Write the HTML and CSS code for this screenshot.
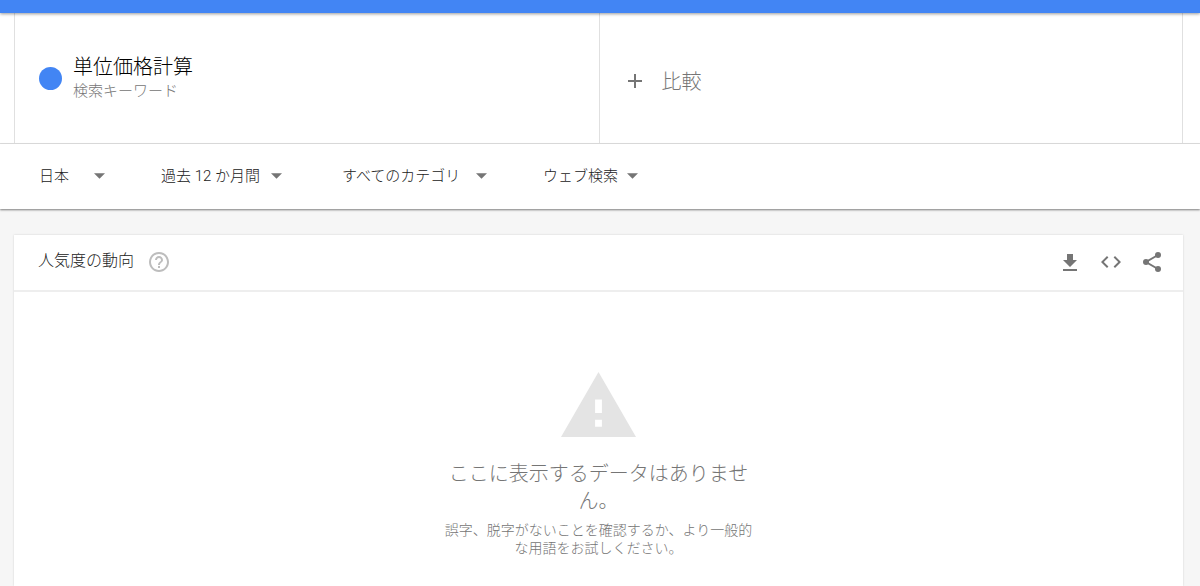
FILE: index.html
```html
<!DOCTYPE html>
<html lang="ja">
<head>
    <meta charset="UTF-8">
    <meta name="viewport" content="width=device-width, initial-scale=1.0">
    <title>単位価格計算 - 調べる</title>
    <link rel="stylesheet" href="styles.css">
</head>
<body>
    <header class="top-bar"></header>

    <section class="terms">
        <div class="term">
            <span class="dot"></span>
            <div>
                <h1 class="term-name">単位価格計算</h1>
                <p class="term-type">検索キーワード</p>
            </div>
        </div>
        <button type="button" class="term compare">
            <svg class="icon" viewBox="0 0 24 24"><path d="M19 13h-6v6h-2v-6H5v-2h6V5h2v6h6v2z"/></svg>
            <span>比較</span>
        </button>
    </section>

    <form class="filters">
        <select class="filter region" aria-label="地域">
            <option>日本</option>
        </select>
        <select class="filter period" aria-label="期間">
            <option>過去 12 か月間</option>
        </select>
        <select class="filter category" aria-label="カテゴリ">
            <option>すべてのカテゴリ</option>
        </select>
        <select class="filter source" aria-label="検索の種類">
            <option>ウェブ検索</option>
        </select>
    </form>

    <main>
        <section class="card">
            <div class="card-header">
                <h2 class="card-title">人気度の動向</h2>
                <button type="button" class="icon-button help" aria-label="ヘルプ">
                    <svg class="icon" viewBox="0 0 24 24"><path d="M11 18h2v-2h-2v2zm1-16C6.480 2 2 6.480 2 12s4.480 10 10 10 10-4.480 10-10S17.520 2 12 2zm0 18c-4.410 0-8-3.590-8-8s3.590-8 8-8 8 3.590 8 8-3.590 8-8 8zm0-14c-2.210 0-4 1.790-4 4h2c0-1.100.900-2 2-2s2 .900 2 2c0 2-3 1.750-3 5h2c0-2.250 3-2.500 3-5 0-2.210-1.790-4-4-4z"/></svg>
                </button>
                <div class="actions">
                    <button type="button" class="icon-button" aria-label="ダウンロード">
                        <svg class="icon" viewBox="0 0 24 24"><path d="M19 10h-4V4H9v6H5l7 7 7-7zM5 19v2h14v-2H5z"/></svg>
                    </button>
                    <button type="button" class="icon-button" aria-label="埋め込み">
                        <svg class="icon" viewBox="0 0 24 24"><path d="M9.400 16.600L4.800 12l4.600-4.600L8 6l-6 6 6 6 1.400-1.400zm5.200 0l4.600-4.600-4.600-4.600L16 6l6 6-6 6-1.400-1.400z"/></svg>
                    </button>
                    <button type="button" class="icon-button" aria-label="共有">
                        <svg class="icon" viewBox="0 0 24 24">
                            <path d="M18 5L6 12l12 7" fill="none" stroke="currentColor" stroke-width="2"/>
                            <circle cx="18" cy="5" r="3"/>
                            <circle cx="6" cy="12" r="3"/>
                            <circle cx="18" cy="19" r="3"/>
                        </svg>
                    </button>
                </div>
            </div>
            <div class="empty">
                <svg class="warning" viewBox="0 0 22 19"><path d="M0 19h22L11 0 0 19zm12-3h-2v-2h2v2zm0-4h-2V8h2v4z"/></svg>
                <p class="empty-title">ここに表示するデータはありません。</p>
                <p class="empty-text">誤字、脱字がないことを確認するか、より一般的な用語をお試しください。</p>
            </div>
        </section>
    </main>
</body>
</html>
```
FILE: styles.css
```css
* {
    box-sizing: border-box;
}

body {
    display: flex;
    flex-direction: column;
    min-height: 100vh;
    margin: 0;
    background-color: #f6f6f6;
    color: #212121;
    font-family: Roboto, "Noto Sans CJK JP", sans-serif;
    font-weight: 300;
}

h1, h2, p {
    margin: 0;
    font-weight: 300;
}

button, select {
    border: none;
    background: none;
    font: inherit;
    cursor: pointer;
}

.icon {
    display: block;
    width: 24px;
    height: 24px;
    fill: currentColor;
}

.top-bar {
    position: relative;
    height: 13px;
    background-color: #4285f4;
    box-shadow: 0 1px 3px rgba(0, 0, 0, 0.4);
}

/* search terms */
.terms {
    display: grid;
    grid-template-columns: 1fr 1fr;
    padding: 0 17px 0 14px;
    background-color: #fff;
    border-bottom: 1px solid #e0e0e0;
}

.term {
    display: flex;
    align-items: center;
    height: 130px;
    padding: 0 24px;
    border-left: 1px solid #e0e0e0;
}

.dot {
    width: 23px;
    height: 23px;
    margin-right: 11px;
    border-radius: 50%;
    background-color: #4285f4;
}

.term-name {
    color: #000;
    font-size: 20px;
    line-height: 26px;
}

.term-type {
    color: #757575;
    font-size: 15px;
    line-height: 22px;
}

.compare {
    gap: 15px;
    padding: 5px 24px 0 23px;
    border-right: 1px solid #e0e0e0;
    color: #757575;
    font-size: 20px;
}

/* filters */
.filters {
    display: flex;
    align-items: center;
    gap: 56px;
    height: 65px;
    padding: 0 39px 2px;
    background-color: #fff;
    box-shadow: 0 1px 2px rgba(0, 0, 0, 0.5);
}

.filter {
    height: 32px;
    padding: 0;
    appearance: none;
    color: #212121;
    font-size: 15px;
    background: url("data:image/svg+xml,%3Csvg xmlns='http://www.w3.org/2000/svg' viewBox='0 0 10 5'%3E%3Cpath fill='%23757575' d='M0 0h10L5 5z'/%3E%3C/svg%3E") no-repeat right center / 11px 6px;
}

.region {
    width: 66px;
}

.period {
    width: 121px;
    margin-right: 4px;
}

.category {
    width: 145px;
}

.source {
    width: 95px;
}

/* trend card */
main {
    display: flex;
    flex-grow: 1;
    padding: 26px 17px 0 14px;
}

.card {
    flex-grow: 1;
    background-color: #fff;
    box-shadow: 0 0 2px rgba(0, 0, 0, 0.15);
}

.card-header {
    display: flex;
    align-items: center;
    height: 57px;
    padding: 0 19px 2px 24px;
    border-bottom: 2px solid #eee;
}

.card-title {
    font-size: 16px;
    line-height: 24px;
    padding-bottom: 2px;
}

.icon-button {
    padding: 0;
    color: #757575;
}

.help {
    margin-left: 13px;
    color: #bdbdbd;
}

.actions {
    display: flex;
    gap: 17px;
    margin-left: auto;
}

.empty {
    width: 314px;
    margin: 0 auto;
    padding-top: 80px;
    color: #757575;
    text-align: center;
}

.warning {
    display: block;
    width: 75px;
    height: 65px;
    margin: 0 auto 24px;
    fill: #e4e4e4;
}

.empty-title {
    margin-bottom: 6px;
    font-size: 20px;
    line-height: 27px;
}

.empty-text {
    font-size: 14px;
    line-height: 18px;
}
```
